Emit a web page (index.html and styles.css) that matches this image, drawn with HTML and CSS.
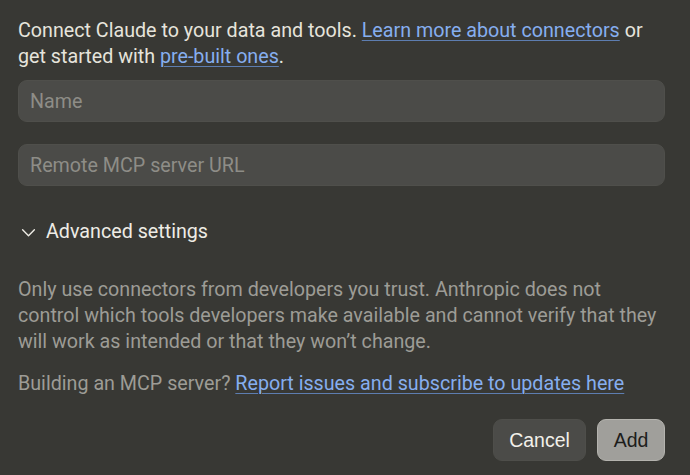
FILE: index.html
```html
<!DOCTYPE html>
<html lang="en">
<head>
  <meta charset="UTF-8">
  <meta name="viewport" content="width=device-width, initial-scale=1.0">
  <title>Add custom connector</title>
  <link rel="stylesheet" href="styles.css">
</head>
<body>
  <div class="dialog">
    <p class="intro">
      Connect Claude to your data and tools. <a href="#">Learn more about connectors</a> or
      get started with <a href="#">pre-built ones</a>.
    </p>

    <div class="fields">
      <input type="text" class="field" placeholder="Name">
      <input type="text" class="field" placeholder="Remote MCP server URL">
    </div>

    <button class="advanced" type="button">
      <svg class="chevron" width="14" height="14" viewBox="0 0 14 14" fill="none">
        <path d="M1.5 4.5 L7 10 L12.5 4.5" stroke="currentColor" stroke-width="1.3" stroke-linecap="round" stroke-linejoin="round"/>
      </svg>
      <span>Advanced settings</span>
    </button>

    <p class="note">
      Only use connectors from developers you trust. Anthropic does not
      control which tools developers make available and cannot verify that they
      will work as intended or that they won’t change.
    </p>

    <p class="note building">
      Building an MCP server? <a href="#">Report issues and subscribe to updates here</a>
    </p>

    <div class="actions">
      <button class="btn btn-cancel" type="button">Cancel</button>
      <button class="btn btn-add" type="button">Add</button>
    </div>
  </div>
</body>
</html>
```

FILE: styles.css
```css
/* Page */
body {
  margin: 0;
  background: #383834;
  font-family: 'Roboto', 'Liberation Sans', sans-serif;
  color: #e6e4dc;
}

.dialog {
  padding: 18px 25px 14px 18px;
  display: flex;
  flex-direction: column;
}

p {
  margin: 0;
  font-size: 19.7px;
  line-height: 26px;
}

a {
  color: #86aeef;
  text-decoration: underline;
  text-decoration-color: #5d7db0;
  text-decoration-thickness: 1px;
  text-underline-offset: 3px;
}

/* Inputs */
.fields {
  display: flex;
  flex-direction: column;
  gap: 22px;
  margin-top: 10px;
}

.field {
  height: 42px;
  box-sizing: border-box;
  padding: 0 11px;
  background: #4b4b48;
  border: 1px solid #4f4f4b;
  border-radius: 9px;
  font-family: inherit;
  font-size: 19.7px;
  color: #e6e4dc;
  outline: none;
}

.field::placeholder {
  color: #8e8d87;
}

/* Advanced settings toggle */
.advanced {
  display: flex;
  align-items: center;
  gap: 10px;
  margin-top: 33px;
  padding: 0 0 0 3px;
  background: none;
  border: none;
  font-family: inherit;
  font-size: 19.7px;
  line-height: 26px;
  color: #eeece5;
  cursor: pointer;
  align-self: flex-start;
}

.chevron {
  width: 15px;
  height: 15px;
  margin-top: 1px;
}

/* Notes */
.note {
  color: #9d9c96;
  margin-top: 32px;
}

.building {
  margin-top: 16px;
}

/* Buttons */
.actions {
  display: flex;
  justify-content: flex-end;
  gap: 11px;
  margin-top: 22px;
}

.btn {
  height: 42px;
  border-radius: 9px;
  font-family: 'Liberation Sans', Arial, sans-serif;
  font-size: 19.5px;
  cursor: pointer;
}

.btn-cancel {
  width: 93px;
  background: #4b4b48;
  border: 1px solid #4e4e4a;
  color: #f2f0ea;
}

.btn-add {
  width: 68px;
  background: #a09f9b;
  border: 1px solid #b4b3ae;
  color: #1d1d1b;
}
```
